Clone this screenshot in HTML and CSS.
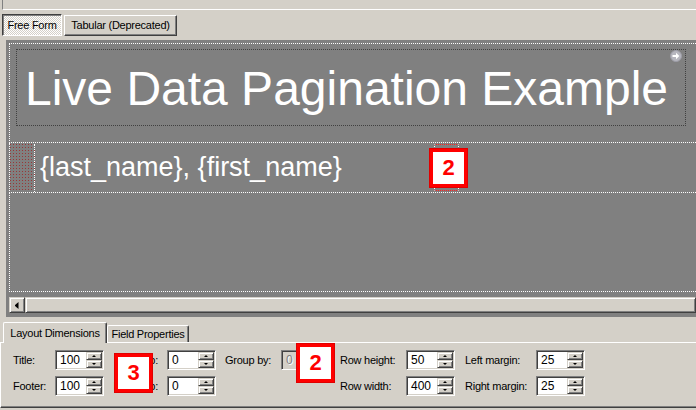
FILE: index.html
```html
<!DOCTYPE html>
<html>
<head>
<meta charset="utf-8">
<title>Report Designer</title>
<link rel="stylesheet" href="styles.css">
</head>
<body>
<div class="topbar"></div>
<div class="viewtabs">
  <div class="vbtn pressed">Free Form</div>
  <div class="vbtn raised">Tabular (Deprecated)</div>
</div>
<div class="canvas">
  <div class="report">
    <div class="band title-band">
      <div class="title-box">
        <span class="title-text">Live Data Pagination Example</span>
        <svg class="title-icon" width="12" height="12" viewBox="0 0 12 12">
          <circle cx="6" cy="6" r="5.5" fill="#b6b6be" stroke="#9c9ca6" stroke-width="1"/>
          <path d="M2.5 5h3.5V2.8L9.3 6 6 9.2V7H2.5z" fill="#fff"/>
        </svg>
      </div>
    </div>
    <div class="band detail-band">
      <div class="row-sel"></div>
      <div class="detail-text">{last_name}, {first_name}</div>
      <div class="field-box"><div class="badge badge-field">2</div></div>
    </div>
    <div class="band footer-band"></div>
  </div>
  <div class="hscroll">
    <div class="sb-btn"><span class="arrow-left"></span></div>
    <div class="sb-thumb"></div>
  </div>
</div>
<div class="props">
  <div class="ptabs">
    <div class="ptab active">Layout Dimensions</div>
    <div class="ptab">Field Properties</div>
  </div>
  <div class="ppanel">
    <div class="pgrid">
      <div class="lbl">Title:</div>
      <div class="spin"><span class="val">100</span><span class="ud"><i class="up"></i><i class="dn"></i></span></div>
      <div class="lbl right">Top gap:</div>
      <div class="spin"><span class="val">0</span><span class="ud"><i class="up"></i><i class="dn"></i></span></div>
      <div class="lbl pad">Group by:</div>
      <div class="dis"><span class="val">0</span></div>
      <div class="lbl">Row height:</div>
      <div class="spin"><span class="val">50</span><span class="ud"><i class="up"></i><i class="dn"></i></span></div>
      <div class="lbl">Left margin:</div>
      <div class="spin"><span class="val">25</span><span class="ud"><i class="up"></i><i class="dn"></i></span></div>

      <div class="lbl">Footer:</div>
      <div class="spin"><span class="val">100</span><span class="ud"><i class="up"></i><i class="dn"></i></span></div>
      <div class="lbl right">Row gap:</div>
      <div class="spin"><span class="val">0</span><span class="ud"><i class="up"></i><i class="dn"></i></span></div>
      <div class="lbl"></div>
      <div class="lbl"></div>
      <div class="lbl">Row width:</div>
      <div class="spin"><span class="val">400</span><span class="ud"><i class="up"></i><i class="dn"></i></span></div>
      <div class="lbl">Right margin:</div>
      <div class="spin"><span class="val">25</span><span class="ud"><i class="up"></i><i class="dn"></i></span></div>
    </div>
    <div class="badge badge-3">3</div>
    <div class="badge badge-2">2</div>
  </div>
</div>
</body>
</html>
```
FILE: styles.css
```css
* { box-sizing: border-box; }
html, body { margin: 0; padding: 0; }
body {
  width: 696px;
  height: 410px;
  overflow: hidden;
  background: #d4d0c8;
  font-family: "Liberation Sans", Arial, sans-serif;
  font-size: 11px;
  letter-spacing: -0.25px;
  color: #000;
}

/* top strip */
.topbar {
  height: 10px;
  margin-left: 2px;
  border-left: 1px solid #808080;
  border-bottom: 1px solid #fff;
}

/* view toggle buttons */
.viewtabs {
  height: 30px;
  display: flex;
  align-items: flex-start;
  gap: 2px;
  padding: 4px 0 0 2px;
}
.vbtn {
  display: flex;
  align-items: center;
  justify-content: center;
  line-height: 13px;
  white-space: nowrap;
}
.vbtn.pressed {
  width: 60px;
  height: 22px;
  padding-top: 1px;
  border: 1px solid;
  border-color: #404040 #fff #fff #404040;
  box-shadow: inset 1px 1px #808080;
  background: repeating-conic-gradient(#ffffff 0 25%, #d4d0c8 0 50%) 0 0 / 2px 2px;
}
.vbtn.raised {
  width: 113px;
  height: 21px;
  margin-top: 1px;
  border: 1px solid;
  border-color: #fff #404040 #404040 #fff;
  box-shadow: inset -1px -1px #808080;
  background: #d4d0c8;
}

/* design canvas */
.canvas {
  margin-left: 6px;
  width: 690px;
  height: 277px;
  background: #808080;
  padding: 3px 0 4px 3px;
  display: flex;
  flex-direction: column;
}
.report {
  display: flex;
  flex-direction: column;
}
.band {
  border-left: 1px dotted #fff;
  border-bottom: 1px dotted #fff;
}
.title-band {
  height: 100px;
  border-top: 1px dotted #fff;
  padding: 5px 0 0 6px;
}
.title-box {
  position: relative;
  width: 670px;
  height: 77px;
  border: 1px dotted #404040;
  padding: 11px 0 0 8px;
}
.title-text {
  display: block;
  color: #fff;
  font-size: 48px;
  line-height: 55px;
  letter-spacing: 0;
  white-space: nowrap;
}
.title-icon {
  position: absolute;
  top: 0;
  right: 3px;
}
.detail-band {
  height: 50px;
  display: flex;
}
.row-sel {
  width: 25px;
  margin-top: 1px;
  border-right: 1px dotted #fff;
  background-color: #808080;
  background-image:
    linear-gradient(90deg, transparent 1px, #808080 1px),
    linear-gradient(180deg, #983838 1px, #808080 1px);
  background-size: 3px 3px, 3px 3px;
}
.detail-text {
  width: 399px;
  flex: none;
  display: flex;
  align-items: center;
  padding-left: 5px;
  color: #fff;
  font-size: 27px;
  letter-spacing: 0;
  white-space: nowrap;
}
.field-box {
  position: relative;
  width: 25px;
  height: 47px;
  margin-top: 1px;
  border-left: 1px dotted #fff;
  border-right: 1px dotted #fff;
  border-top: 1px dotted #ff2020;
  border-bottom: 1px dotted #ff2020;
}
.footer-band {
  height: 99px;
}

/* red annotation badges */
.badge {
  position: absolute;
  width: 39px;
  height: 40px;
  border: 4px solid #ff0000;
  outline: 1px solid #e00000;
  outline-offset: -1px;
  background: #fff;
  color: #ff0000;
  font-size: 22px;
  font-weight: bold;
  letter-spacing: 0;
  display: flex;
  align-items: center;
  justify-content: center;
  z-index: 5;
}
.badge-field { left: -6px; top: 3px; }

/* horizontal scrollbar */
.hscroll {
  margin-top: 5px;
  height: 16px;
  display: flex;
}
.sb-btn, .sb-thumb {
  background: #d4d0c8;
  border: 1px solid;
  border-color: #d4d0c8 #404040 #404040 #d4d0c8;
  box-shadow: inset 1px 1px #fff, inset -1px -1px #808080;
}
.sb-btn {
  width: 16px;
  display: flex;
  align-items: center;
  justify-content: center;
  padding: 1px 1px 0 0;
}
.arrow-left {
  width: 4px;
  height: 7px;
  background: #000;
  clip-path: polygon(100% 0, 100% 100%, 0 50%);
}
.sb-thumb { flex: 1; }

/* property tabs */
.props {
  padding-top: 5px;
}
.ptabs {
  height: 20px;
  display: flex;
  align-items: flex-end;
  padding-left: 3px;
  position: relative;
  z-index: 2;
}
.ptab {
  height: 17px;
  width: 82px;
  text-align: center;
  line-height: 13px;
  padding-top: 2px;
  white-space: nowrap;
  background: #d4d0c8;
  border-top: 1px solid #fff;
  border-left: 1px solid #fff;
  border-right: 1px solid #404040;
  box-shadow: inset -1px 0 #808080;
  border-radius: 2px 2px 0 0;
}
.ptab.active {
  width: 104px;
  height: 21px;
  margin-bottom: -1px;
  padding-top: 4px;
}
.ppanel {
  position: relative;
  height: 66px;
  border-top: 1px solid #fff;
  border-left: 1px solid #fff;
  border-bottom: 1px solid #404040;
  box-shadow: inset 0 -1px #808080;
  padding: 7px 0 0 12px;
}
.pgrid {
  display: grid;
  grid-template-columns: 42px 49px 63px 49px 65px 59px 66px 59px 71px 49px;
  grid-auto-rows: 20px;
  row-gap: 6px;
}
.lbl {
  display: flex;
  align-items: center;
  line-height: 13px;
  white-space: nowrap;
}
.lbl.right { justify-content: flex-end; padding-right: 9px; }
.lbl.pad { padding-left: 9px; }

.spin, .dis {
  width: 49px;
  height: 20px;
  display: flex;
  border: 1px solid;
  border-color: #808080 #fff #fff #808080;
  box-shadow: inset 1px 1px #404040, inset -1px -1px #d4d0c8;
  background: #fff;
  padding: 1px 1px 1px 1px;
}
.dis {
  width: 38px;
  background: #d4d0c8;
}
.val {
  flex: 1;
  padding-left: 3px;
  font-size: 12px;
  letter-spacing: 0;
  line-height: 16px;
}
.dis .val {
  color: #808080;
  text-shadow: 1px 1px #fff;
}
.ud {
  width: 16px;
  display: flex;
  flex-direction: column;
}
.ud i {
  flex: 1;
  position: relative;
  background: #d4d0c8;
  border: 1px solid;
  border-color: #d4d0c8 #404040 #404040 #d4d0c8;
  box-shadow: inset 1px 1px #fff, inset -1px -1px #808080;
}
.ud i::after {
  content: "";
  position: absolute;
  left: 5px;
  top: 2px;
  width: 4px;
  height: 2px;
  background: #000;
}
.ud i.up::after { clip-path: polygon(50% 0, 100% 100%, 0 100%); }
.ud i.dn::after { clip-path: polygon(0 0, 100% 0, 50% 100%); }

.badge-3 { left: 113px; top: 10px; }
.badge-2 { left: 295px; top: 0; }
```
